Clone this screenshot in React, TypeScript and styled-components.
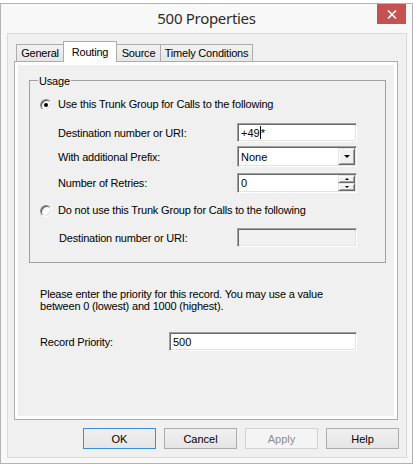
import React from "react";
import styled, { createGlobalStyle } from "styled-components";

const GlobalStyle = createGlobalStyle`
  html, body { margin: 0; padding: 0; background: #fff; }
  body { font-family: "Liberation Sans", Arial, sans-serif; font-size: 11px; color: #000; }
  * { box-sizing: border-box; }
`;

const Window = styled.div`
  margin-top: 3px;
  width: 413px;
  height: 461px;
  border: 1px solid #b4b4b4;
  background: #f8f8f8;
  display: flex;
  flex-direction: column;
`;

const TitleBar = styled.div`
  height: 29px;
  flex: none;
  display: grid;
  grid-template-columns: 1fr auto 1fr;
  align-items: start;
`;

const Title = styled.div`
  grid-column: 2;
  font-family: "Noto Sans", "Open Sans", sans-serif;
  font-size: 15px;
  letter-spacing: -0.3px;
  line-height: 29px;
  color: #2b2b2b;
`;

const CloseButton = styled.div`
  grid-column: 3;
  justify-self: end;
  margin-right: 6px;
  width: 29px;
  height: 20px;
  background: #c75050;
  display: flex;
  align-items: center;
  justify-content: center;
`;

const Client = styled.div`
  flex: 1;
  margin: 0 5px 5px 6px;
  border: 1px solid #dadada;
  background: #f0f0f0;
  padding: 7px 0 8px 6px;
  display: flex;
  flex-direction: column;
`;

const TabStrip = styled.div`
  height: 20px;
  display: flex;
  align-items: flex-end;
  padding-left: 2px;
`;

const Tab = styled.div<{ $w: number; $active?: boolean }>`
  width: ${(p) => p.$w}px;
  height: ${(p) => (p.$active ? 21 : 17)}px;
  margin-bottom: ${(p) => (p.$active ? -1 : 0)}px;
  margin-left: -1px;
  &:first-child { margin-left: 0; }
  border: 1px solid #acacac;
  border-bottom: none;
  background: ${(p) => (p.$active ? "#fff" : "linear-gradient(#f2f2f2, #e6e6e6)")};
  position: relative;
  z-index: ${(p) => (p.$active ? 1 : 0)};
  display: flex;
  align-items: center;
  justify-content: center;
  letter-spacing: -0.2px;
  white-space: nowrap;
`;

const Panel = styled.div`
  width: 384px;
  height: 359px;
  border: 1px solid #acacac;
  background: #fff;
  padding: 3px;
  display: flex;
`;

const Page = styled.div`
  flex: 1;
  background: #f0f0f0;
  padding: 10px 0 0 11px;
  display: flex;
  flex-direction: column;
  letter-spacing: -0.18px;
`;

const GroupBox = styled.div`
  width: 357px;
`;

const GroupHead = styled.div`
  height: 13px;
  display: flex;
  line-height: 13px;
  &::before,
  &::after {
    content: "";
    align-self: flex-end;
    height: 7px;
    border-top: 1px solid #a0a0a0;
  }
  &::before {
    width: 8px;
    border-left: 1px solid #a0a0a0;
  }
  &::after {
    flex: 1;
    border-right: 1px solid #a0a0a0;
  }
`;

const GroupLabel = styled.span`
  padding: 0 1px;
`;

const GroupBody = styled.div`
  border: 1px solid #a0a0a0;
  border-top: none;
  padding: 10px 0 15px 10px;
`;

const RadioRow = styled.div<{ $mt?: number }>`
  height: 13px;
  margin-top: ${(p) => p.$mt ?? 0}px;
  display: flex;
  align-items: center;
  gap: 6px;
  line-height: 13px;
`;

const Radio = styled.span<{ $on?: boolean }>`
  width: 12px;
  height: 12px;
  border-radius: 50%;
  border: 1px solid;
  border-color: #8a8a8a #fff #fff #8a8a8a;
  box-shadow: inset 1px 1px 0 #555, inset -1px -1px 0 #dcdcdc;
  background: #fff;
  display: flex;
  align-items: center;
  justify-content: center;
  &::after {
    content: "";
    width: 4px;
    height: 4px;
    border-radius: 50%;
    background: ${(p) => (p.$on ? "#000" : "transparent")};
  }
`;

const FieldRow = styled.div<{ $mt?: number; $label: number; $indent?: number }>`
  margin-top: ${(p) => p.$mt ?? 0}px;
  margin-left: ${(p) => p.$indent ?? 0}px;
  display: grid;
  grid-template-columns: ${(p) => p.$label}px auto;
  align-items: center;
`;

const Sunken = styled.div<{ $w: number; $h: number; $disabled?: boolean }>`
  width: ${(p) => p.$w}px;
  height: ${(p) => p.$h}px;
  border: 1px solid;
  border-color: #a0a0a0 #fff #fff #a0a0a0;
  box-shadow: inset 1px 1px 0 #696969, inset -1px -1px 0 #e3e3e3;
  background: ${(p) => (p.$disabled ? "#f0f0f0" : "#fff")};
  padding: 1px 1px 1px 3px;
  display: flex;
  align-items: center;
  letter-spacing: 0;
`;

const Value = styled.span`
  flex: 1;
  display: flex;
  align-items: center;
`;

const Caret = styled.span`
  width: 1px;
  height: 13px;
  background: #000;
`;

const RaisedButton = styled.div<{ $h: number }>`
  width: 17px;
  height: ${(p) => p.$h}px;
  background: #f0f0f0;
  border: 1px solid;
  border-color: #e3e3e3 #696969 #696969 #e3e3e3;
  box-shadow: inset 1px 1px 0 #fff, inset -1px -1px 0 #a0a0a0;
  display: flex;
  align-items: center;
  justify-content: center;
`;

const Arrow = styled.span<{ $size: number; $up?: boolean }>`
  width: 0;
  height: 0;
  border-left: ${(p) => p.$size}px solid transparent;
  border-right: ${(p) => p.$size}px solid transparent;
  ${(p) =>
    p.$up
      ? `border-bottom: ${p.$size}px solid #000;`
      : `border-top: ${p.$size}px solid #000;`}
`;

const SpinStack = styled.div`
  display: flex;
  flex-direction: column;
`;

const Note = styled.p`
  margin: 25px 0 0 11px;
  line-height: 12px;
`;

const ButtonRow = styled.div`
  margin-top: 8px;
  padding-right: 7px;
  display: flex;
  justify-content: flex-end;
  gap: 8px;
`;

const DialogButton = styled.div<{ $default?: boolean; $disabled?: boolean }>`
  width: 73px;
  height: 21px;
  border: 1px solid
    ${(p) => (p.$default ? "#3c8fe0" : p.$disabled ? "#d2d2d2" : "#acacac")};
  background: ${(p) => (p.$disabled ? "#f4f4f4" : "linear-gradient(#f0f0f0, #e5e5e5)")};
  color: ${(p) => (p.$disabled ? "#8d8d8d" : "#000")};
  display: flex;
  align-items: center;
  justify-content: center;
`;

export default function App() {
  return (
    <>
      <GlobalStyle />
      <Window>
        <TitleBar>
          <Title>500 Properties</Title>
          <CloseButton>
            <svg width="10" height="9" viewBox="0 0 10 9">
              <path d="M1 0.5 L9 8.5 M9 0.5 L1 8.5" stroke="#fff" strokeWidth="1.7" />
            </svg>
          </CloseButton>
        </TitleBar>
        <Client>
          <TabStrip>
            <Tab $w={48}>General</Tab>
            <Tab $w={54} $active>
              Routing
            </Tab>
            <Tab $w={45}>Source</Tab>
            <Tab $w={93}>Timely Conditions</Tab>
          </TabStrip>
          <Panel>
            <Page>
              <GroupBox>
                <GroupHead>
                  <GroupLabel>Usage</GroupLabel>
                </GroupHead>
                <GroupBody>
                  <RadioRow>
                    <Radio $on />
                    Use this Trunk Group for Calls to the following
                  </RadioRow>
                  <FieldRow $mt={12} $indent={18} $label={179}>
                    <span>Destination number or URI:</span>
                    <Sunken $w={120} $h={19}>
                      <Value>
                        +49
                        <Caret />*
                      </Value>
                    </Sunken>
                  </FieldRow>
                  <FieldRow $mt={4} $indent={18} $label={179}>
                    <span>With additional Prefix:</span>
                    <Sunken $w={120} $h={21}>
                      <Value>None</Value>
                      <RaisedButton $h={17}>
                        <Arrow $size={3.5} />
                      </RaisedButton>
                    </Sunken>
                  </FieldRow>
                  <FieldRow $mt={6} $indent={18} $label={179}>
                    <span>Number of Retries:</span>
                    <Sunken $w={120} $h={20}>
                      <Value>0</Value>
                      <SpinStack>
                        <RaisedButton $h={8}>
                          <Arrow $size={2} $up />
                        </RaisedButton>
                        <RaisedButton $h={8}>
                          <Arrow $size={2} />
                        </RaisedButton>
                      </SpinStack>
                    </Sunken>
                  </FieldRow>
                  <RadioRow $mt={11}>
                    <Radio />
                    Do not use this Trunk Group for Calls to the following
                  </RadioRow>
                  <FieldRow $mt={11} $indent={19} $label={178}>
                    <span>Destination number or URI:</span>
                    <Sunken $w={120} $h={19} $disabled />
                  </FieldRow>
                </GroupBody>
              </GroupBox>
              <Note>
                Please enter the priority for this record. You may use a value
                <br />
                between 0 (lowest) and 1000 (highest).
              </Note>
              <FieldRow $mt={20} $indent={11} $label={129}>
                <span>Record Priority:</span>
                <Sunken $w={188} $h={19}>
                  <Value>500</Value>
                </Sunken>
              </FieldRow>
            </Page>
          </Panel>
          <ButtonRow>
            <DialogButton $default>OK</DialogButton>
            <DialogButton>Cancel</DialogButton>
            <DialogButton $disabled>Apply</DialogButton>
            <DialogButton>Help</DialogButton>
          </ButtonRow>
        </Client>
      </Window>
    </>
  );
}
